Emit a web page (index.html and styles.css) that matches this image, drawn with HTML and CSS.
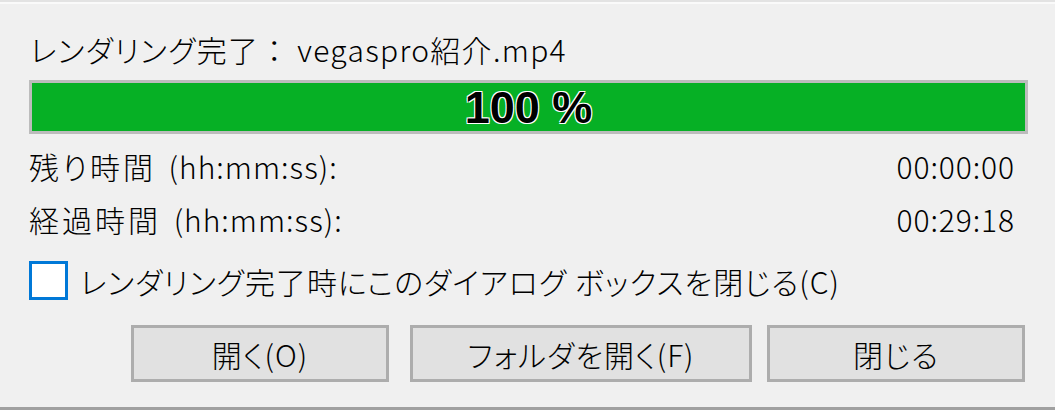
FILE: index.html
```html
<!DOCTYPE html>
<html lang="ja">
<head>
<meta charset="utf-8">
<link rel="stylesheet" href="styles.css">
</head>
<body>
<div class="window">
  <div class="inner">
    <div class="title">レンダリング完了<span class="colon">：</span> vegaspro紹介.mp4</div>
    <div class="progress">
      <span class="pct">100 %</span>
    </div>
    <div class="row"><span><span class="kanji">残り時間</span> (hh:mm:ss):</span><span class="val">00:00:00</span></div>
    <div class="row"><span><span class="kanji">経過時間</span> (hh:mm:ss):</span><span class="val">00:29:18</span></div>
    <label class="check"><span class="box"></span><span>レンダリング完了時にこのダイアログ ボックスを閉じる(C)</span></label>
    <div class="buttons">
      <button class="btn btn-open">開く(O)</button>
      <button class="btn btn-folder">フォルダを開く(F)</button>
      <button class="btn btn-close">閉じる</button>
    </div>
  </div>
</div>
</body>
</html>
```
FILE: styles.css
```css
html, body {
  margin: 0;
  padding: 0;
  background: #f0f0f0;
}
body {
  width: 1055px;
  height: 410px;
  overflow: hidden;
  font-family: "Noto Sans CJK JP", "Noto Sans", sans-serif;
  font-size: 30px;
  font-weight: 300;
  color: #000;
  font-feature-settings: "palt";
  letter-spacing: 1px;
}
.window {
  box-sizing: border-box;
  border-top: 2px solid #e3e3e3;
  border-bottom: 3px solid #a0a0a0;
  height: 410px;
}
.inner {
  border-top: 2px solid #fafafa;
  padding: 0 27px 0 29px;
}
.title {
  height: 30px;
  line-height: 30px;
  margin-top: 30px;
  padding-left: 1px;
  letter-spacing: 1.3px;
}
.colon {
  font-feature-settings: normal;
  letter-spacing: 0;
}
.progress {
  margin-top: 16px;
  height: 54px;
  box-sizing: border-box;
  border: 3px solid #bcbcbc;
  background: #06b025;
  display: flex;
  align-items: center;
  justify-content: center;
}
.pct {
  font-weight: bold;
  font-family: "Liberation Sans", sans-serif;
  font-size: 45px;
  line-height: 1;
  letter-spacing: 0;
  text-shadow: 1px 1px 0 #fff, -1px -1px 0 #fff, 1px -1px 0 #fff, -1px 1px 0 #fff;
}
.row {
  display: flex;
  justify-content: space-between;
  height: 30px;
  line-height: 30px;
  padding-right: 14px;
  word-spacing: 5px;
}
.kanji {
  letter-spacing: 3px;
}
.progress + .row { margin-top: 17px; }
.row + .row { margin-top: 23px; }
.val {
  letter-spacing: 0.9px;
  margin-right: -1px;
}
.check {
  display: flex;
  align-items: center;
  gap: 12px;
  margin-top: 27px;
  height: 39px;
}
.box {
  width: 39px;
  height: 39px;
  box-sizing: border-box;
  border: 3px solid #0078d7;
  background: #fff;
  flex: none;
}
.buttons {
  display: flex;
  margin-top: 25px;
  padding-left: 102px;
}
.btn {
  height: 57px;
  box-sizing: border-box;
  border: 3px solid #adadad;
  background: #e1e1e1;
  font: inherit;
  letter-spacing: 1px;
  color: #000;
  padding: 0;
  line-height: 1;
}
.btn-open { width: 258px; }
.btn-folder { width: 342px; margin-left: 21px; }
.btn-close { width: 258px; margin-left: 15px; }
```
